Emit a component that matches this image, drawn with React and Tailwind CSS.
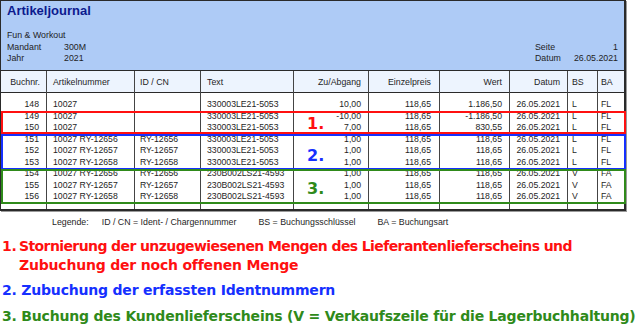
import React from 'react';

const cols = 'grid grid-cols-[46px_88px_66px_93px_75px_71px_70px_58px_30px_27px]';

const rows = [
  ['148', '10027', '', '330003LE21-5053', '10,00', '118,65', '1.186,50', 'L', 'FL'],
  ['149', '10027', '', '330003LE21-5053', '-10,00', '118,65', '-1.186,50', 'L', 'FL'],
  ['150', '10027', '', '330003LE21-5053', '7,00', '118,65', '830,55', 'L', 'FL'],
  ['151', '10027 RY-12656', 'RY-12656', '330003LE21-5053', '1,00', '118,65', '118,65', 'L', 'FL'],
  ['152', '10027 RY-12657', 'RY-12657', '330003LE21-5053', '1,00', '118,65', '118,65', 'L', 'FL'],
  ['153', '10027 RY-12658', 'RY-12658', '330003LE21-5053', '1,00', '118,65', '118,65', 'L', 'FL'],
  ['154', '10027 RY-12656', 'RY-12656', '230B002LS21-4593', '1,00', '118,65', '118,65', 'V', 'FA'],
  ['155', '10027 RY-12657', 'RY-12657', '230B002LS21-4593', '1,00', '118,65', '118,65', 'V', 'FA'],
  ['156', '10027 RY-12658', 'RY-12658', '230B002LS21-4593', '1,00', '118,65', '118,65', 'V', 'FA'],
];

const cell = 'border-r border-[#444] whitespace-nowrap';

const Row = ({ r, h = 'h-[11.5px] leading-[11.5px]' }) => (
  <div className={`${cols} ${h}`}>
    <div className={`${cell} text-right pr-[7px]`}>{r[0]}</div>
    <div className={`${cell} pl-[6px]`}>{r[1]}</div>
    <div className={`${cell} pl-[5px]`}>{r[2]}</div>
    <div className={`${cell} pl-[6px]`}>{r[3]}</div>
    <div className={`${cell} text-right pr-[7px]`}>{r[4]}</div>
    <div className={`${cell} text-right pr-[8px]`}>{r[5]}</div>
    <div className={`${cell} text-right pr-[7px]`}>{r[6]}</div>
    <div className={`${cell} text-right pr-[7px]`}>{r[0] ? '26.05.2021' : ''}</div>
    <div className={`${cell} pl-[4px]`}>{r[7]}</div>
    <div className="pl-[3px] whitespace-nowrap">{r[8]}</div>
  </div>
);

export default function App() {
  return (
    <div className="w-[642px] h-[329px] bg-white overflow-hidden font-['Liberation_Sans',Arial,sans-serif] text-[#1e1e1e]">
      {/* Report frame */}
      <div className="relative w-[626px] border-l border-t border-r-2 border-b-2 border-[#2a2a2a] shadow-[1px_1px_0_#9a9a9a]">
        <div className="h-[70px] bg-[#aecbf6] border-b border-[#2a2a2a] px-[6px] pt-[1px] text-[8.8px] flex flex-col">
          <div className="text-[13px] font-bold text-[#0c1a8e] leading-[18px]">Artikeljournal</div>
          <div className="flex items-end mt-[10px]">
            <div className="flex flex-col leading-[11.5px]">
              <span>Fun &amp; Workout</span>
              <div className="flex"><span className="w-[57px]">Mandant</span><span>300M</span></div>
              <div className="flex"><span className="w-[57px]">Jahr</span><span>2021</span></div>
            </div>
            <div className="ml-auto flex flex-col leading-[11.5px] w-[83px]">
              <div className="flex justify-between"><span>Seite</span><span>1</span></div>
              <div className="flex justify-between"><span>Datum</span><span>26.05.2021</span></div>
            </div>
          </div>
        </div>

        <div className={`${cols} h-[22px] leading-[22px] bg-[#edf4fe] border-b border-[#2a2a2a] text-[8.8px]`}>
          <div className={`${cell} text-right pr-[6px]`}>Buchnr.</div>
          <div className={`${cell} pl-[6px]`}>Artikelnummer</div>
          <div className={`${cell} pl-[5px]`}>ID / CN</div>
          <div className={`${cell} pl-[6px]`}>Text</div>
          <div className={`${cell} text-right pr-[7px]`}>Zu/Abgang</div>
          <div className={`${cell} text-right pr-[8px]`}>Einzelpreis</div>
          <div className={`${cell} text-right pr-[7px]`}>Wert</div>
          <div className={`${cell} text-right pr-[7px]`}>Datum</div>
          <div className={`${cell} pl-[4px]`}>BS</div>
          <div className="pl-[3px]">BA</div>
        </div>

        <div className="text-[8.7px]">
          <Row r={['', '', '', '', '', '', '', '', '']} h="h-[6px]" />
          {rows.map((r) => (
            <Row key={r[0]} r={r} />
          ))}
          <Row r={['', '', '', '', '', '', '', '', '']} h="h-[6px]" />
        </div>

        {/* group markers */}
        <div className="absolute left-0 top-[110px] w-[625px] h-[23px] border-2 border-[#ff1010]" />
        <div className="absolute left-0 top-[133px] w-[625px] h-[36px] border-2 border-[#1530ff]" />
        <div className="absolute left-0 top-[168px] w-[625px] h-[35px] border-2 border-[#2f8a1a]" />
        <div className="absolute left-[306px] top-[111px] text-[16px] font-bold text-[#ff1010] font-['DejaVu_Sans',sans-serif]">1.</div>
        <div className="absolute left-[306px] top-[143px] text-[16px] font-bold text-[#1530ff] font-['DejaVu_Sans',sans-serif]">2.</div>
        <div className="absolute left-[306px] top-[176px] text-[16px] font-bold text-[#2f8a1a] font-['DejaVu_Sans',sans-serif]">3.</div>
      </div>

      <div className="flex text-[8.8px] mt-[6px] leading-[11px] whitespace-nowrap">
        <span className="ml-[52px]">Legende:</span>
        <span className="ml-[13px]">ID / CN = Ident- / Chargennummer</span>
        <span className="ml-[22px]">BS = Buchungsschlüssel</span>
        <span className="ml-[22px]">BA = Buchungsart</span>
      </div>

      <div className="font-['DejaVu_Sans',sans-serif] font-bold text-[14px] tracking-[-0.2px] whitespace-nowrap mt-[9px] pl-[2px]">
        <div className="text-[#ff1010] leading-[19px] flex">
          <span className="w-[17px]">1.</span>
          <div>
            <div className="tracking-[-0.6px]">Stornierung der unzugewiesenen Mengen des Lieferantenlieferscheins und</div>
            <div>Zubuchung der noch offenen Menge</div>
          </div>
        </div>
        <div className="text-[#1530ff] leading-[19px] mt-[6px]">2. Zubuchung der erfassten Identnummern</div>
        <div className="text-[#2f8a1a] leading-[19px] mt-[7px]">3. Buchung des Kundenlieferscheins (V = Verkaufszeile für die Lagerbuchhaltung)</div>
      </div>
    </div>
  );
}
